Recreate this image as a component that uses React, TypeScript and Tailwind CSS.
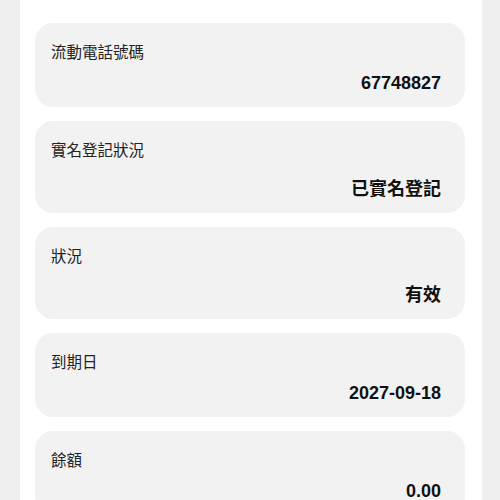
import React from "react";

interface InfoRow {
  label: string;
  value: string;
  cjk?: boolean;
}

const rows: InfoRow[] = [
  { label: "流動電話號碼", value: "67748827" },
  { label: "實名登記狀況", value: "已實名登記", cjk: true },
  { label: "狀況", value: "有效", cjk: true },
  { label: "到期日", value: "2027-09-18" },
  { label: "餘額", value: "0.00" },
];

function InfoCard({ label, value, cjk }: InfoRow) {
  return (
    <div className="rounded-[18px] bg-[#f2f2f2] px-4 pt-[19px] pb-[10px]">
      <div className="text-[15.5px] leading-[22px] text-[#222222]">{label}</div>
      <div
        className={`mr-2 text-right text-[18px] font-bold leading-[27px] text-[#111111] ${
          cjk ? "mt-[14px]" : "mt-[6px]"
        }`}
      >
        {value}
      </div>
    </div>
  );
}

export default function App() {
  return (
    <div
      className="min-h-[500px] bg-[#efefef]"
      style={{ fontFamily: '"Liberation Sans", "Noto Sans CJK TC", sans-serif' }}
    >
      <div className="ml-[20px] w-[462px] min-h-[500px] bg-white pt-[23px] pl-[15px] pr-[17px]">
        <div className="flex flex-col gap-[14px]">
          {rows.map((r) => (
            <InfoCard key={r.label} {...r} />
          ))}
        </div>
      </div>
    </div>
  );
}
